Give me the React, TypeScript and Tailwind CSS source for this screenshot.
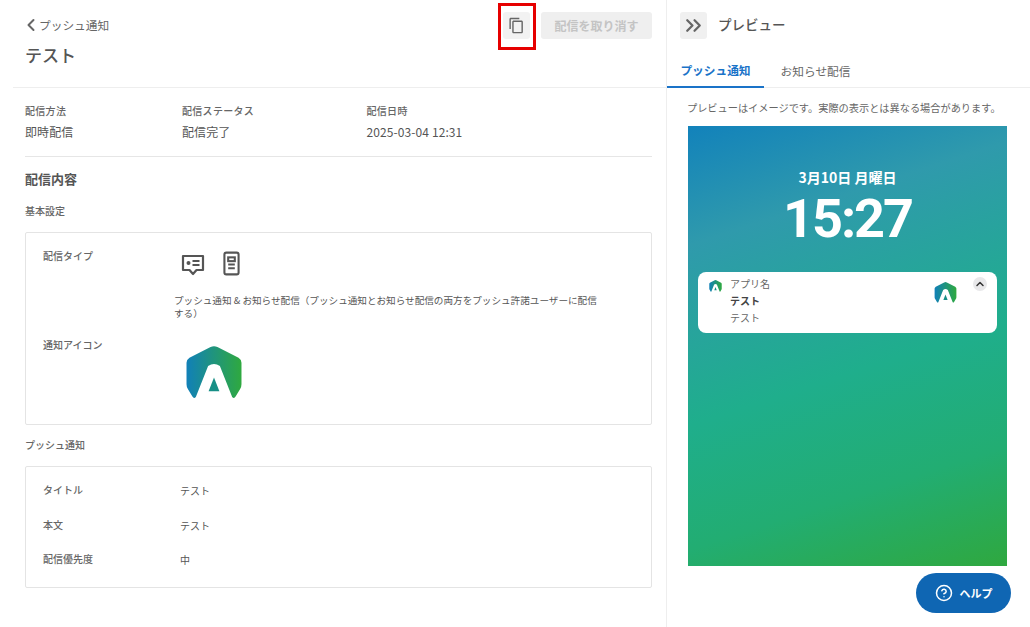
import { ChevronLeft, ChevronsRight, ChevronUp, CircleHelp } from 'lucide-react';

function Logo({ id, className }: { id: string; className: string }) {
  return (
    <svg viewBox="0 0 56 54" className={className}>
      <defs>
        <linearGradient id={id} x1="0" y1="0" x2="1" y2="0">
          <stop offset="0" stopColor="#1180b8" />
          <stop offset="1" stopColor="#2fa93f" />
        </linearGradient>
      </defs>
      <path
        d="M24.5 1 Q28 -0.5 31.5 1 L53 12 Q56 14 56 17 L56 39 Q56 42 54.5 44 L50 51.5 Q48.5 54 46.5 52 L34 20.5 Q28 16 22 20.5 L9.5 52 Q7.5 54 6 51.5 L1.5 44 Q0 42 0 39 L0 17 Q0 14 3 12 Z"
        fill={`url(#${id})`}
      />
      <path d="M28 32 L33.5 46 L22.5 46 Z" fill="#178f86" />
    </svg>
  );
}

function Field({ label, value, width }: { label: string; value: string; width: string }) {
  return (
    <div className={`${width} shrink-0`}>
      <div className="text-[10px] leading-[14px] font-medium tracking-[0.3px] text-[#666]">{label}</div>
      <div className="mt-[5px] text-xs leading-[18px] tracking-[0.1px] text-[#555]">{value}</div>
    </div>
  );
}

function Row({ label, value }: { label: string; value: string }) {
  return (
    <div className="flex h-[34.5px]">
      <div className="w-[137px] shrink-0 text-[10px] leading-[14px] font-medium text-[#666]">{label}</div>
      <div className="text-[10px] leading-[16px] text-[#555]">{value}</div>
    </div>
  );
}

export default function App() {
  return (
    <div
      className="relative flex h-[627px] w-[1030px] overflow-hidden bg-white"
      style={{ fontFamily: '"Noto Sans CJK JP", "Noto Sans", sans-serif' }}
    >
      <main className="w-[667px] shrink-0 border-r border-[#eeeeee] pl-[13px]">
        <header className="flex h-[88px] border-b border-[#eeeeee] pl-[12px] pr-[14px]">
          <div className="flex-1 pt-[15px]">
            <div className="flex h-[20px] items-center text-[11.7px] text-[#666]">
              <ChevronLeft className="ml-[-4px] h-[20px] w-[20px]" strokeWidth={2.4} />
              <span className="ml-[-2px]">プッシュ通知</span>
            </div>
            <h1 className="mt-[8px] text-[17px] leading-[24px] font-medium text-[#555]">テスト</h1>
          </div>
          <div className="flex items-start gap-[11px] pt-[12px]">
            <button className="flex h-[27px] w-[27px] items-center justify-center rounded-[3px] bg-[#f2f2f2] text-[#666]">
              <svg viewBox="0 0 24 24" className="h-[17px] w-[17px]" fill="currentColor">
                <path d="M16 1H4c-1.1 0-2 .9-2 2v14h2V3h12V1zm3 4H8c-1.1 0-2 .9-2 2v14c0 1.1.9 2 2 2h11c1.1 0 2-.9 2-2V7c0-1.1-.9-2-2-2zm0 16H8V7h11v14z" />
              </svg>
            </button>
            <button className="h-[27px] w-[111px] rounded-[3px] bg-[#efefef] text-xs font-bold text-[#c4c4c4]">
              配信を取り消す
            </button>
          </div>
        </header>

        <div className="pl-[12px] pr-[14px]">
          <div className="flex h-[69px] border-b border-[#e6e6e6] pt-[16px]">
            <Field width="w-[157px]" label="配信方法" value="即時配信" />
            <Field width="w-[184.5px]" label="配信ステータス" value="配信完了" />
            <Field width="w-[200px]" label="配信日時" value="2025-03-04 12:31" />
          </div>

          <h2 className="mt-[12px] text-[13px] leading-[20px] font-bold text-[#555]">配信内容</h2>
          <h3 className="mt-[15px] text-[10px] leading-[14px] font-medium text-[#666]">基本設定</h3>

          <section className="mt-[14px] h-[193px] rounded-[2px] border border-[#e4e4e4] pl-[17px] pt-[16px]">
            <div className="flex">
              <div className="w-[131px] shrink-0 text-[10px] leading-[14px] font-medium text-[#666]">配信タイプ</div>
              <div>
                <div className="flex items-center gap-[18px] pl-[7px] pt-[3px] text-[#555]">
                  <svg viewBox="0 0 24 24" className="h-[24px] w-[24px]" fill="none" stroke="currentColor" strokeWidth="2.2">
                    <path d="M2 4h20v14h-6.5L12 22l-3.5-4H2z" strokeLinejoin="round" />
                    <circle cx="7.5" cy="11" r="2" fill="currentColor" stroke="none" />
                    <path d="M11.5 9h7M11.5 13h7" />
                  </svg>
                  <svg viewBox="0 0 18 26" className="mt-[-2px] h-[25px] w-[17px]" fill="none" stroke="currentColor" strokeWidth="2.2">
                    <rect x="1.5" y="1.5" width="15" height="23" rx="2" />
                    <rect x="5.5" y="6.5" width="7" height="4" />
                    <path d="M5.5 14h7M5.5 18h7" />
                  </svg>
                </div>
                <p className="mt-[18px] w-[426px] text-[9.6px] leading-[13px] text-[#555]">
                  プッシュ通知 &amp; お知らせ配信（プッシュ通知とお知らせ配信の両方をプッシュ許諾ユーザーに配信する）
                </p>
              </div>
            </div>
            <div className="mt-[18px] flex">
              <div className="w-[143px] shrink-0 text-[10px] leading-[14px] font-medium text-[#666]">通知アイコン</div>
              <Logo id="logo-large" className="mt-[8px] h-[53px] w-[56px]" />
            </div>
          </section>

          <h3 className="mt-[13px] text-[10px] leading-[14px] font-medium text-[#666]">プッシュ通知</h3>

          <section className="mt-[14px] h-[122px] rounded-[2px] border border-[#e4e4e4] pl-[17px] pt-[16px]">
            <Row label="タイトル" value="テスト" />
            <Row label="本文" value="テスト" />
            <Row label="配信優先度" value="中" />
          </section>
        </div>
      </main>

      <aside className="flex-1">
        <div className="flex h-[50px] items-start gap-[11px] pl-[13px] pt-[12px]">
          <button className="flex h-[27px] w-[27px] items-center justify-center rounded-[3px] bg-[#f0f0f0] text-[#666]">
            <ChevronsRight className="h-[25px] w-[25px]" strokeWidth={2.2} />
          </button>
          <h2 className="text-[13.5px] leading-[25px] font-medium text-[#555]">プレビュー</h2>
        </div>

        <nav className="flex h-[38px] border-b border-[#eeeeee] text-[11.7px]">
          <div className="flex h-[38px] w-[97px] items-center justify-center border-b-2 border-[#1a73c8] pt-[4px] font-bold text-[#1a73c8]">
            プッシュ通知
          </div>
          <div className="flex w-[103px] items-center justify-center pt-[4px] text-[#666]">お知らせ配信</div>
        </nav>

        <div className="pl-[20px] pt-[12px]">
          <p className="text-[10.2px] leading-[16px] whitespace-nowrap text-[#666]">
            プレビューはイメージです。実際の表示とは異なる場合があります。
          </p>

          <div className="ml-[1px] mt-[10px] h-[440px] w-[319px] bg-[linear-gradient(162deg,#1282bb_0%,#2f9aac_22%,#1fae8c_55%,#22ad72_78%,#2fa83f_100%)] px-[10px] pt-[42px]">
            <div className="text-center text-sm leading-[18px] font-bold text-white">3月10日 月曜日</div>
            <div className="mt-[3px] text-center text-[54px] leading-[60px] font-bold tracking-[-2px] text-white" style={{ fontFamily: '"Roboto", sans-serif' }}>
              15:27
            </div>

            <div className="mt-[23px] flex h-[61px] rounded-[8px] bg-white pl-[11px] pr-[10px] pt-[3px]">
              <Logo id="logo-small" className="mt-[5px] h-[12px] w-[13px]" />
              <div className="ml-[8px] flex-1 text-[10px] leading-[17px] text-[#666]">
                <div>アプリ名</div>
                <div className="font-bold text-[#444]">テスト</div>
                <div>テスト</div>
              </div>
              <Logo id="logo-mid" className="mr-[16px] mt-[7px] h-[21px] w-[23px]" />
              <div className="mt-[2px] flex h-[14px] w-[14px] items-center justify-center rounded-full bg-[#e8e8ea] text-[#333]">
                <ChevronUp className="h-[12px] w-[12px]" strokeWidth={3} />
              </div>
            </div>
          </div>
        </div>
      </aside>

      <button className="absolute left-[916px] top-[573px] flex h-[40px] w-[95px] items-center justify-center gap-[7px] rounded-[20px] bg-[#0f66b3] text-[11px] font-bold text-white">
        <CircleHelp className="h-[18px] w-[18px]" strokeWidth={2} />
        ヘルプ
      </button>

      <div className="absolute left-[498px] top-[3px] h-[47px] w-[38px] border-[3px] border-[#e60000]" />
    </div>
  );
}
